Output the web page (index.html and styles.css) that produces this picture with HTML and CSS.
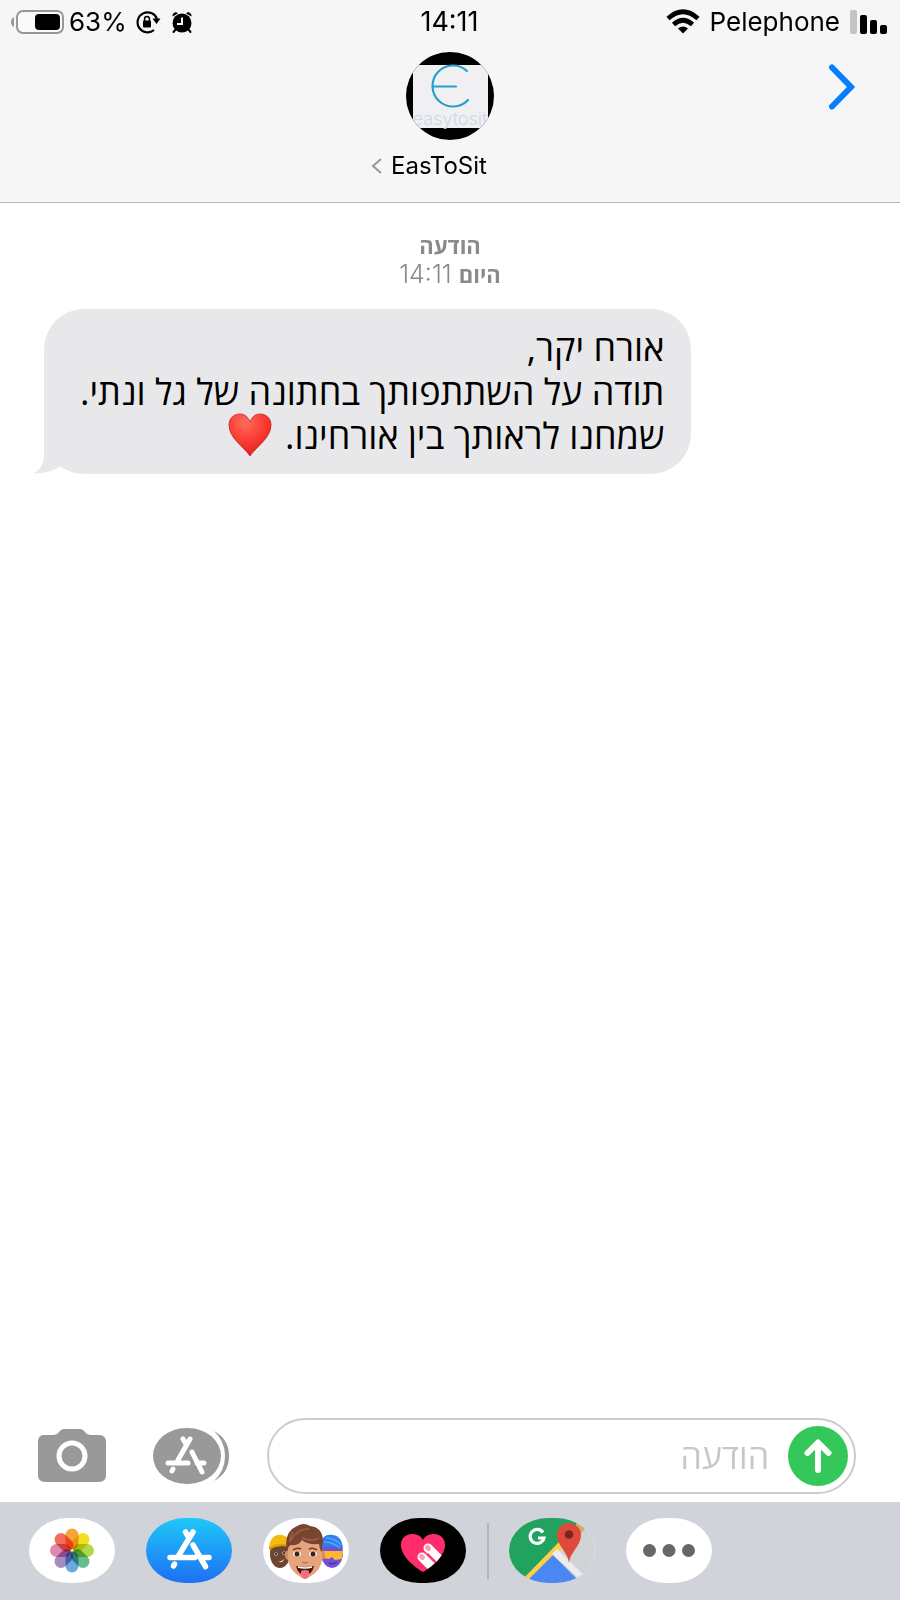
FILE: index.html
```html
<!DOCTYPE html>
<html lang="he">
<head>
<meta charset="utf-8">
<meta name="viewport" content="width=device-width, initial-scale=1">
<title>EasToSit</title>
<link rel="stylesheet" href="styles.css">
</head>
<body>
<header class="header">
  <div class="status">
    <div class="status-left">
      <svg class="battery" width="54" height="26" viewBox="0 0 54 26" aria-hidden="true"><path d="M3 8v10q-3-1.500-3-5t3-5z" fill="#999"/><rect x="6" y="2" width="46" height="22" rx="6" fill="#fafafa" stroke="#979797" stroke-width="2"/><rect x="24" y="5" width="25" height="16" rx="4"/></svg>
      <span>63%</span>
      <svg class="lock" width="26" height="24" viewBox="0 0 26 24" aria-hidden="true"><path d="M22 9A10 10 0 1 0 19 20" fill="none" stroke="#000" stroke-width="2.200"/><path d="M17.500 8.500h8L21.500 14z"/><rect x="8" y="10.500" width="8" height="7" rx="1"/><path d="M9.600 11V9a2.400 2.400 0 0 1 4.800 0v2" fill="none" stroke="#000" stroke-width="1.500"/></svg>
      <svg class="alarm" width="22" height="24" viewBox="0 0 22 24" aria-hidden="true"><circle cx="11" cy="13" r="9.500"/><path d="M1.500 6.500Q1 3 5 2l2 1.500zM20.500 6.500Q21 3 17 2l-2 1.500z"/><path d="M5 19l-2.500 3M17 19l2.500 3" stroke="#000" stroke-width="2" stroke-linecap="round"/><path d="M11 7.500V14H6" fill="none" stroke="#f6f6f6" stroke-width="2"/></svg>
    </div>
    <time class="clock">14:11</time>
    <div class="status-right">
      <svg width="34" height="26" viewBox="0 0 34 26" aria-hidden="true"><g fill="none" stroke="#000" stroke-width="4.600"><path d="M2 9.500Q17-4 32 9.500"/><path d="M7.500 15.500Q17 7 26.500 15.500"/></g><path d="M12 19.500q5-4 10 0l-5 5z"/></svg>
      <span>Pelephone</span>
      <svg class="signal" width="38" height="24" viewBox="0 0 38 24" aria-hidden="true"><rect width="7" height="24" rx="2" fill="#c4c4c4"/><rect x="10" y="5" width="7" height="19" rx="2"/><rect x="20" y="10" width="7" height="14" rx="2"/><rect x="30" y="15" width="7" height="9" rx="2"/></svg>
    </div>
  </div>
  <div class="contact">
    <svg class="avatar" viewBox="0 0 88 88" role="img" aria-label="easytosit"><defs><clipPath id="face"><circle cx="44" cy="44" r="44"/></clipPath></defs><g clip-path="url(#face)"><rect width="88" height="88"/><rect x="7" y="13" width="75" height="63" fill="#f0f0f3"/><path d="M61 19A20.500 20.500 0 1 0 62 48" fill="none" stroke="#259fce" stroke-width="2.200" stroke-linecap="round"/><path d="M27 34.500h23" stroke="#259fce" stroke-width="2.200" stroke-linecap="round"/><text class="logo-text" x="44" y="73" text-anchor="middle">easytosit</text></g></svg>
    <button class="name" type="button"><svg width="12" height="18" viewBox="0 0 12 18" aria-hidden="true"><path d="M10 2L2 9l8 7" fill="none" stroke="#9296a0" stroke-width="2"/></svg><span>EasToSit</span></button>
    <button class="forward" type="button" aria-label="חזרה"><svg width="28" height="48" viewBox="0 0 28 48" aria-hidden="true"><path d="M4 4.500L23 24 4 43.500" fill="none" stroke="#087eff" stroke-width="6" stroke-linecap="round" stroke-linejoin="miter"/></svg></button>
  </div>
</header>

<main class="thread">
  <div class="stamp" dir="rtl"><strong>הודעה</strong><div><strong>היום</strong> <time>14:11</time></div></div>
  <div class="bubble" dir="rtl">
    <p>אורח יקר,<br>תודה על השתתפותך בחתונה של גל ונתי.<br>שמחנו לראותך בין אורחינו. <svg class="heart" viewBox="0 0 44 44" role="img" aria-label="לב"><defs><radialGradient id="red" cx=".4" cy=".2" r=".8"><stop offset="0" stop-color="#ff6d5c"/><stop offset=".5" stop-color="#fb4038"/><stop offset="1" stop-color="#e3201d"/></radialGradient></defs><path d="M22 43C16 34 1 25 1 12 1 5 6 1 12 1c5 0 8 3 10 8 2-5 5-8 10-8 6 0 11 4 11 11 0 13-15 22-21 31z" fill="url(#red)" stroke="#c9211e" stroke-width=".8"/></svg></p>
    <svg class="tail" width="44" height="50" viewBox="0 0 44 50" aria-hidden="true"><path d="M11 0v30C11 40 7 47 0 49c10 1 20-2 28-7L44 20V0z" fill="#e8e8ea"/></svg>
  </div>
</main>

<form class="compose">
  <button class="camera" type="button" aria-label="מצלמה"><svg width="68" height="54" viewBox="0 0 68 54" aria-hidden="true"><path d="M6 6h10q3 0 5-3 2-3 5-3h16q3 0 5 3 2 3 5 3h9q7 0 7 7v33q0 7-7 7H7q-7 0-7-7V13q0-7 6-7z" fill="#999"/><circle cx="34" cy="27" r="13" fill="none" stroke="#fff" stroke-width="5"/></svg></button>
  <button class="drawer" type="button" aria-label="אפליקציות"><svg width="78" height="56" viewBox="0 0 78 56" aria-hidden="true"><rect width="68" height="56" rx="33" ry="28" fill="#999"/><path d="M61 3q11 10 11 25T61 53q15-8 15-25T61 3z" fill="#999"/><g fill="none" stroke="#fff" stroke-width="5" stroke-linecap="round"><path d="M30 11l3 5M37 11L25 32M15 35h20M39 24l10 20M44 35h7M20 41l-1 2"/></g></svg></button>
  <div class="field" dir="rtl">
    <button class="send" type="submit" aria-label="שליחה"><svg width="28" height="34" viewBox="0 0 28 34" aria-hidden="true"><path d="M14 31V4M3.500 14L14 3.500 24.500 14" fill="none" stroke="#fff" stroke-width="6" stroke-linecap="round" stroke-linejoin="round"/></svg></button>
    <input type="text" placeholder="הודעה" aria-label="הודעה">
  </div>
</form>

<nav class="apps" aria-label="אפליקציות">
  <button class="app" type="button" aria-label="תמונות"><svg viewBox="0 0 86 65" aria-hidden="true"><g class="petals" transform="translate(43 32.500)"><rect x="-6.500" y="-22" width="13" height="21" rx="6.500" fill="#f9a43a"/><rect x="-6.500" y="-22" width="13" height="21" rx="6.500" fill="#f3df20" transform="rotate(45)"/><rect x="-6.500" y="-22" width="13" height="21" rx="6.500" fill="#b4d749" transform="rotate(90)"/><rect x="-6.500" y="-22" width="13" height="21" rx="6.500" fill="#65be91" transform="rotate(135)"/><rect x="-6.500" y="-22" width="13" height="21" rx="6.500" fill="#69a9df" transform="rotate(180)"/><rect x="-6.500" y="-22" width="13" height="21" rx="6.500" fill="#a58bc2" transform="rotate(225)"/><rect x="-6.500" y="-22" width="13" height="21" rx="6.500" fill="#dc8ab0" transform="rotate(270)"/><rect x="-6.500" y="-22" width="13" height="21" rx="6.500" fill="#f36c60" transform="rotate(315)"/></g></svg></button>
  <button class="app store" type="button" aria-label="App Store"><svg viewBox="0 0 86 65" aria-hidden="true"><g fill="none" stroke="#fff" stroke-width="5.500" stroke-linecap="round"><path d="M39.500 14l3 5M47 14L33 37M24 39.500h25M47 27l12.500 21.500M57 39.500h6M28.500 46l-1 2"/></g></svg></button>
  <button class="app" type="button" aria-label="ממוג'י"><svg viewBox="0 0 86 65" aria-hidden="true">
    <ellipse cx="17" cy="36" rx="10" ry="14" fill="#6d462e"/><path d="M6 31C6 19 14 14 22 18l6 4v7Q16 26 6 31z" fill="#f2bd10"/><path d="M6 31q9-6 20-3" fill="none" stroke="#d89c05" stroke-width="2"/><circle cx="13" cy="36" r="1.600" fill="#fff"/><circle cx="21" cy="35" r="1.600" fill="#fff"/><circle cx="13" cy="36" r="1"/><circle cx="21" cy="35" r="1"/><path d="M13 43q5 2 8-2-1 5-8 2z" fill="#fff"/>
    <ellipse cx="69" cy="35" rx="11" ry="15" fill="#7250d4"/><path d="M58 29q0-14 12-12 9 1 10 14-9-5-20-1z" fill="#327de8"/><path d="M63 20q9 0 15 7M61 24q9 0 16 6" stroke="#51a9ff" stroke-width="1.500" fill="none"/><path d="M60 33h20l-1 8-7 1-3-3-3 2-6-1z" fill="#ffb52e"/><path d="M66 45q4 2 8-1" stroke="#4c30a6" stroke-width="1.500" fill="none"/>
    <ellipse cx="25" cy="37" rx="3" ry="5" fill="#d88b61"/><ellipse cx="59" cy="37" rx="3" ry="5" fill="#d88b61"/><path d="M25 28q17-14 34 0v14q-2 13-17 19-15-6-17-19z" fill="#e7a37b"/><path d="M24 34Q20 14 34 8q7-4 13 0 12 1 13 14l-1 12q-2-1-3-8-12 1-17-4-3 6-11 5-3 1-4 7z" fill="#774530"/><path d="M28 22q7-12 18-11M39 20q10 4 17 0M30 14q-3 4-3 10" fill="none" stroke="#9c6245" stroke-width="1.500"/><path d="M30 32q4-3 8-1M46 31q4-2 8 1" stroke="#6d3f2a" stroke-width="1.500" fill="none"/><ellipse cx="34" cy="36" rx="4" ry="2.500" fill="#fff"/><ellipse cx="50" cy="36" rx="4" ry="2.500" fill="#fff"/><circle cx="34" cy="36" r="2.500" fill="#3c2417"/><circle cx="50" cy="36" r="2.500" fill="#3c2417"/><path d="M39 44q3 2 6 0" fill="none" stroke="#b96f4e" stroke-width="1.500"/><path d="M33 48q9 2 18 0-2 9-9 9t-9-9z" fill="#4b1715"/><path d="M35 49q7 2 14 0" stroke="#fff" stroke-width="1.500" fill="none"/><path d="M38 53q4-2 8 0v4q-1 4-4 4t-4-4z" fill="#f1717b"/></svg></button>
  <button class="app black" type="button" aria-label="Digital Touch"><svg viewBox="0 0 86 65" aria-hidden="true"><defs><clipPath id="love"><path d="M43 54C36 50 21 39 21 27c0-7 5-11 11-11 5 0 9 2 11 6 2-4 6-6 11-6 6 0 11 4 11 11 0 12-15 23-22 27z"/></clipPath></defs><g clip-path="url(#love)"><rect width="86" height="65" fill="#ff2d6c"/><g stroke="#fff" stroke-width="9" stroke-linecap="round"><path d="M48 30l17 17M42 39l17 17"/></g><path d="M47.500 35.500l17 17" stroke="#ff2d6c" stroke-width="1.500"/><g stroke="#ff9db9" stroke-width="5" stroke-linecap="round"><path d="M47.500 29.500l1 1M41.500 38.500l1 1"/></g></g></svg></button>
  <span class="divider"></span>
  <button class="app maps" type="button" aria-label="Google Maps"><svg viewBox="0 0 86 65" aria-hidden="true"><path d="M0 0h86v65H0z" fill="#d0d2d3"/><path d="M0 0h72L52 28 14 65H0z" fill="#21a35f"/><path d="M66 0l12 8-8 10z" fill="#c7b45c"/><path d="M50 24l5 5-39 37H9z" fill="#fdcf48"/><path d="M44 37l28 28H16z" fill="#4b87f2"/><path d="M48 31l32 31-4 4-33-30z" fill="#ececee"/><path d="M34 14.500a7 7 0 1 0 1 5.500h-6" fill="none" stroke="#fff" stroke-width="3.200"/><path d="M60 45c-1-11-12-17-12-28a12 12 0 0 1 24 0c0 11-11 17-12 28z" fill="#de493c"/><circle cx="60" cy="16.500" r="4.300" fill="#7d231e"/></svg></button>
  <button class="app" type="button" aria-label="עוד"><svg viewBox="0 0 86 65" aria-hidden="true"><g fill="#66666d"><circle cx="23.500" cy="32.500" r="6.500"/><circle cx="43" cy="32.500" r="6.500"/><circle cx="62.500" cy="32.500" r="6.500"/></g></svg></button>
</nav>
</body>
</html>
```
FILE: styles.css
```css
* { box-sizing: border-box; }

body {
  margin: 0;
  min-height: 100vh;
  display: flex;
  flex-direction: column;
  background: #fff;
  color: #000;
  font-family: Inter, "Open Sans", sans-serif;
}

button {
  margin: 0;
  padding: 0;
  border: 0;
  background: none;
  color: inherit;
  font: inherit;
  cursor: pointer;
}

svg { display: block; }
p { margin: 0; }

.header {
  background: #f6f6f6;
  border-bottom: 1px solid #b7b7b9;
  padding-bottom: 20px;
}

.status {
  display: grid;
  grid-template-columns: 1fr auto 1fr;
  align-items: center;
  height: 44px;
  padding: 0 12px 0 11px;
  font-size: 26px;
  line-height: 32px;
}

.clock { font-size: 27px; }

.status-left, .status-right { display: flex; align-items: center; }
.status-left { gap: 4px; }
.status-left .lock { margin-left: 4px; }
.status-left .alarm { margin-left: 6px; }
.status-right { justify-content: flex-end; gap: 10px; }

.contact {
  position: relative;
  display: flex;
  flex-direction: column;
  align-items: center;
  padding-top: 8px;
}

.avatar { width: 88px; height: 88px; }

.logo-text {
  font-family: Inter, sans-serif;
  font-size: 18px;
  font-weight: 300;
  fill: #cdd6e8;
}

.name {
  display: flex;
  align-items: center;
  gap: 8px;
  margin: 10px 42px 0 0;
  font-size: 24px;
  line-height: 32px;
}

.forward { position: absolute; right: 44px; top: 19px; }

.thread { flex: 1; padding: 28px 44px; }

.stamp {
  text-align: center;
  color: #8a8a8d;
  font-size: 22px;
  line-height: 28px;
}

.stamp strong {
  display: inline-block;
  font-family: "Open Sans", sans-serif;
  font-weight: 700;
}

.stamp time { margin-right: 1px; font-weight: 300; font-size: 25px; }

.bubble {
  position: relative;
  width: fit-content;
  margin-top: 20px;
  margin-right: auto;
  padding: 17px 27px 16px 36px;
  border-radius: 40px;
  background: #e8e8ea;
  font-family: "Open Sans", sans-serif;
  font-size: 36px;
  line-height: 44px;
}

.heart {
  display: inline-block;
  width: 44px;
  height: 44px;
  margin: -8px 4px -8px 0;
  vertical-align: 0;
}

.tail { position: absolute; left: -11px; bottom: 0; }

.compose {
  display: flex;
  align-items: center;
  padding: 0 44px 8px 38px;
}

.drawer { margin-left: 47px; }

.field {
  flex: 1;
  display: flex;
  align-items: center;
  gap: 19px;
  height: 76px;
  min-width: 0;
  margin-left: 36px;
  padding: 0 6px;
  border: 2px solid #ccc;
  border-radius: 38px;
}

.send {
  flex: none;
  display: grid;
  place-items: center;
  width: 60px;
  height: 60px;
  border-radius: 50%;
  background: #34c759;
}

.field input {
  flex: 1;
  min-width: 0;
  padding: 0;
  border: 0;
  outline: 0;
  background: none;
  font-family: "Open Sans", sans-serif;
  font-size: 34px;
  line-height: 44px;
}

.field input::placeholder { color: #c7c7c9; opacity: 1; }

.apps {
  display: flex;
  align-items: center;
  gap: 31px;
  height: 98px;
  padding: 0 29px 1px;
  background: #d0d3da;
}

.app {
  flex: none;
  width: 86px;
  height: 65px;
  overflow: hidden;
  border-radius: 40px / 33px;
  background: #fff;
}

.app svg { width: 86px; height: 65px; }
.store { background: linear-gradient(#1fc8f8, #1e6ff3); }
.black { background: #000; }
.petals { isolation: isolate; }
.petals rect { mix-blend-mode: multiply; }

.divider {
  width: 2px;
  height: 56px;
  margin: 0 -11px 0 -10px;
  background: #b3b5bb;
}
```
